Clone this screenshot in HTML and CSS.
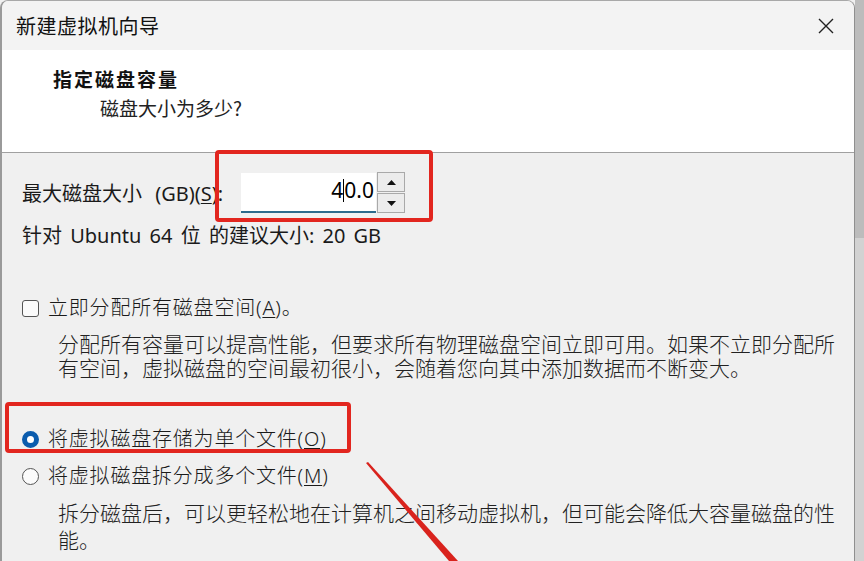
FILE: index.html
```html
<!DOCTYPE html>
<html lang="zh-CN">
<head>
    <meta charset="UTF-8">
    <meta name="viewport" content="width=device-width, initial-scale=1.0">
    <title>新建虚拟机向导</title>
    <link rel="stylesheet" href="styles.css">
</head>
<body>

    <div class="screen">

        <!-- Wizard window -->
        <div class="wizard">

            <!-- Title bar -->
            <div class="titlebar">
                <span class="title">新建虚拟机向导</span>
                <svg class="close" width="16" height="16" viewBox="0 0 16 16">
                    <path d="M1 1L15 15M15 1L1 15"/>
                </svg>
            </div>

            <!-- Page header -->
            <div class="page-head">
                <h2>指定磁盘容量</h2>
                <p>磁盘大小为多少?</p>
            </div>

            <!-- Page body -->
            <div class="page-body">
                <div class="size-row">
                    <span class="size-label">最大磁盘大小 (GB)(<u>S</u>):</span>
                    <div class="spin-field">4<span class="caret"></span>0.0</div>
                    <div class="spin-buttons">
                        <div class="spin-btn">
                            <svg width="9" height="5" viewBox="0 0 9 5"><polygon points="4.5,0 9,5 0,5"/></svg>
                        </div>
                        <div class="spin-btn">
                            <svg width="9" height="5" viewBox="0 0 9 5"><polygon points="0,0 9,0 4.5,5"/></svg>
                        </div>
                    </div>
                </div>
                <p class="hint">针对 Ubuntu 64 位 的建议大小: 20 GB</p>

                <div class="option option-check">
                    <span class="checkbox"></span>
                    <span class="option-text">立即分配所有磁盘空间(<u>A</u>)。</span>
                </div>
                <p class="desc desc-alloc">分配所有容量可以提高性能，但要求所有物理磁盘空间立即可用。如果不立即分配所有空间，虚拟磁盘的空间最初很小，会随着您向其中添加数据而不断变大。</p>

                <div class="option option-single">
                    <span class="radio checked"></span>
                    <span class="option-text">将虚拟磁盘存储为单个文件(<u>O</u>)</span>
                </div>
                <div class="option option-multi">
                    <span class="radio"></span>
                    <span class="option-text">将虚拟磁盘拆分成多个文件(<u>M</u>)</span>
                </div>
                <p class="desc desc-split">拆分磁盘后，可以更轻松地在计算机之间移动虚拟机，但可能会降低大容量磁盘的性能。</p>
            </div>
        </div>

        <!-- Window behind, on the right -->
        <div class="side">
            <div class="side-thumb"></div>
        </div>

        <!-- Red annotations drawn over the screenshot -->
        <div class="mark mark-size"></div>
        <div class="mark mark-single"></div>
        <svg class="arrow" width="864" height="561" viewBox="0 0 864 561">
            <polygon points="366,463 368,462 458,561 449,561"/>
        </svg>
    </div>

</body>
</html>
```

FILE: styles.css
```css
/* General Styles */
* {
    margin: 0;
    padding: 0;
    box-sizing: border-box;
}
body {
    background: #f0f0f0;
    font-family: "Noto Sans", "Noto Sans CJK SC", sans-serif;
    color: #1a1a1a;
    overflow: hidden;
}
u {
    text-decoration-thickness: 1px;
    text-underline-offset: 2px;
}

.screen {
    position: relative;
    display: flex;
    width: 864px;
    height: 561px;
    overflow: hidden;
}

/* Wizard window */
.wizard {
    flex: 1;
    display: flex;
    flex-direction: column;
    border-left: 2px solid #9a9a9a;
    border-top: 1px solid #a8a8a8;
    border-right: 1px solid #8f8f8f;
    border-radius: 8px 8px 0 0;
    overflow: hidden;
    background: #f0f0f0;
}

/* Title bar */
.titlebar {
    height: 49px;
    display: flex;
    align-items: center;
    justify-content: space-between;
    padding: 0 20px 0 14px;
    background: #f3f3f3;
}
.title {
    font-family: "Noto Sans CJK SC", sans-serif;
    font-size: 20px;
    color: #111;
    letter-spacing: 0.5px;
}
.close path {
    stroke: #222;
    stroke-width: 1.4;
    fill: none;
}

/* Page header */
.page-head {
    height: 103px;
    background: #ffffff;
    border-bottom: 1px solid #a0a0a0;
    padding: 15px 0 0 51px;
}
.page-head h2 {
    font-family: "Noto Sans CJK SC", serif;
    font-size: 19px;
    font-weight: 700;
    letter-spacing: 2px;
    line-height: 28px;
    color: #111;
}
.page-head p {
    font-family: "Noto Sans CJK SC", sans-serif;
    font-size: 19px;
    line-height: 30px;
    padding-left: 47px;
    color: #222;
}

/* Page body */
.page-body {
    flex: 1;
    padding: 19px 0 0 20px;
    font-size: 20px;
}

.size-row {
    display: flex;
    align-items: center;
    height: 41px;
}
.size-label {
    width: 219px;
    white-space: nowrap;
    word-spacing: 8px;
}
.spin-field {
    width: 135px;
    height: 40px;
    background: #ffffff;
    border-bottom: 2px solid #2d6a8c;
    text-align: right;
    padding-right: 2px;
    font-size: 21px;
    line-height: 34px;
    color: #000;
}
.caret {
    display: inline-block;
    width: 1px;
    height: 23px;
    background: #000;
    vertical-align: -4px;
}
.spin-buttons {
    display: flex;
    flex-direction: column;
    gap: 1px;
    margin-left: 1px;
}
.spin-btn {
    width: 28px;
    height: 20px;
    background: #ececec;
    border: 1px solid #a9a9a9;
    display: flex;
    align-items: center;
    justify-content: center;
}
.spin-btn polygon {
    fill: #111;
}

.hint {
    margin-top: 10px;
    line-height: 26px;
    word-spacing: 3px;
}

/* Options */
.option {
    display: flex;
    align-items: center;
    line-height: 28px;
}
.option-text {
    margin-left: 9px;
    letter-spacing: 0.8px;
    font-weight: 300;
}
.option-check {
    margin-top: 45px;
}
.option-single {
    margin-top: 45px;
}
.option-multi {
    margin-top: 9px;
}
.checkbox {
    width: 17px;
    height: 17px;
    border: 1px solid #555;
    border-radius: 3px;
    background: #fbfbfb;
}
.radio {
    width: 17px;
    height: 17px;
    border: 1px solid #555;
    border-radius: 50%;
    background: #fbfbfb;
}
.radio.checked {
    border: 5px solid #0b5cad;
    background: #ffffff;
}

.desc {
    padding-left: 36px;
    width: 816px;
    font-size: 21px;
    font-weight: 300;
    color: #222;
}
.desc-alloc {
    margin-top: 10px;
    line-height: 24px;
}
.desc-split {
    margin-top: 10px;
    line-height: 27px;
}

/* Window behind */
.side {
    width: 9px;
    background: #d2d2d2;
}
.side-thumb {
    height: 238px;
    background: #bcbcbc;
}

/* Annotations */
.mark {
    position: absolute;
    border: 4px solid #e2261f;
    border-radius: 4px;
}
.mark-size {
    left: 215px;
    top: 150px;
    width: 218px;
    height: 72px;
}
.mark-single {
    left: 5px;
    top: 402px;
    width: 346px;
    height: 51px;
}
.arrow {
    position: absolute;
    left: 0;
    top: 0;
}
.arrow polygon {
    fill: #d9231d;
}
```
